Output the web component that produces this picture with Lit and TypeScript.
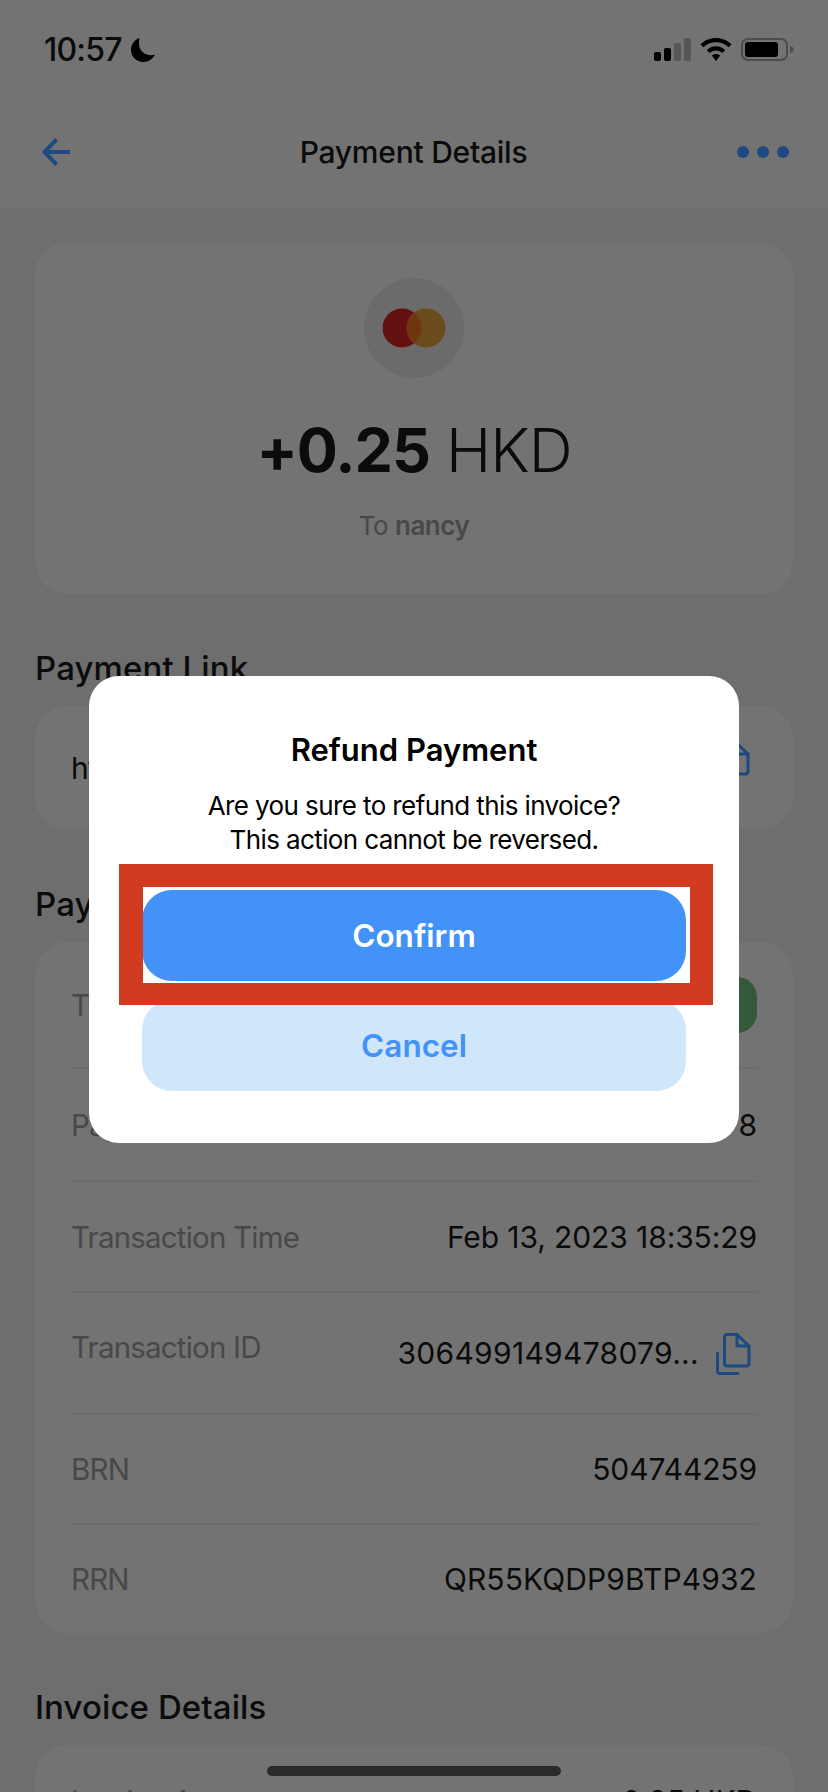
import { LitElement, html, css } from "lit";
import { customElement } from "lit/decorators.js";

const copyIcon = html`<svg class="copy" viewBox="0 0 36 43" fill="none" stroke="#1d4a80" stroke-width="3" stroke-linejoin="round" stroke-linecap="round">
  <path d="M12 2.500H22L34 14V31.500a2.500 2.500 0 0 1-2.500 2.500H12a2.500 2.500 0 0 1-2.500-2.500V5A2.500 2.500 0 0 1 12 2.500z"/>
  <path d="M22 2.500V14H34"/>
  <path d="M2.500 21V39a2.500 2.500 0 0 0 2.500 2.500H23"/>
</svg>`;

@customElement("app-root")
export class AppRoot extends LitElement {
  static styles = css`
    :host { display: block; width: 828px; height: 1792px; overflow: hidden; position: relative; background: #6e6e6e;
      font-family: Inter, "Liberation Sans", sans-serif; color: #0b0b0b; }
    .top { height: 208px; background: #737373; display: flex; flex-direction: column; }
    .status { height: 99px; display: flex; align-items: center; justify-content: space-between; padding: 0 34px 0 44px; }
    .time { display: flex; align-items: center; gap: 9px; font-size: 32px; font-weight: 500; letter-spacing: -0.8px; }
    .sicons { display: flex; align-items: center; gap: 9px; }
    .nav { flex: 1; display: grid; grid-template-columns: 1fr auto 1fr; align-items: center; padding: 0 39px 4px 42px; }
    .nav h1 { margin: 0 4px 0 0; font-size: 30px; font-weight: 500; letter-spacing: -0.25px; }
    .dots { display: flex; gap: 8px; justify-self: end; }
    .dots i { width: 12px; height: 12px; border-radius: 50%; background: #1d4a80; }
    .content { padding: 35px 35px 0; display: flex; flex-direction: column; }
    .card { background: #737373; border-radius: 32px; }
    .hero { height: 351px; display: flex; flex-direction: column; align-items: center; box-sizing: border-box; padding-top: 35px; }
    .logo { width: 100px; height: 100px; border-radius: 50%; background: #6b6b6b; display: flex; align-items: center; justify-content: center; }
    .amount { margin-top: 36px; font-size: 61px; line-height: 72px; font-weight: 300; letter-spacing: -1px; }
    .amount b { font-weight: 700; }
    .to { margin-top: 24px; font-size: 26px; line-height: 32px; color: #484848; letter-spacing: -0.5px; }
    .to b { font-weight: 600; }
    h2 { margin: 0; font-size: 33px; line-height: 36px; font-weight: 500; letter-spacing: 0.1px; }
    .s1 { margin-top: 56px; }
    .s2 { margin-top: 57px; }
    .s3 { margin-top: 56px; }
    .sec-card { margin-top: 20px; }
    .link { height: 123px; display: flex; align-items: center; justify-content: space-between; padding: 0 43px 0 36px; box-sizing: border-box; font-size: 30px; letter-spacing: -0.8px; }
    .link .copy { margin-top: -12px; }
    .rows { padding: 0 36px; }
    .row { display: flex; justify-content: space-between; align-items: center; font-size: 30px; letter-spacing: -0.1px; border-bottom: 2px solid #6d6d6d; box-sizing: border-box; }
    .row:last-child { border-bottom: none; }
    .k { color: #484848; font-size: 29.500px; letter-spacing: -0.8px; }
    .k.up { margin-top: -12px; }
    .pill { width: 130px; height: 56px; border-radius: 20px; background: #34593a; }
    .val { display: flex; align-items: center; gap: 16px; padding-right: 6px; letter-spacing: 0.3px; }
    .wide { letter-spacing: 0.1px; }
    .copy { width: 36px; height: 43px; display: block; }
    .dialog { position: absolute; left: 89px; top: 676px; width: 650px; height: 467px; background: #fff; border-radius: 30px; box-sizing: border-box;
      padding: 56px 53px 0; display: flex; flex-direction: column; text-align: center; }
    .dialog h3 { margin: 0; font-size: 31px; line-height: 36px; font-weight: 600; color: #000; }
    .dialog p { margin: 21px 0 0; font-size: 26px; line-height: 34px; color: #000; letter-spacing: -0.6px; }
    .btn { height: 91px; border-radius: 30px; display: flex; align-items: center; justify-content: center; font-size: 31.500px; font-weight: 600; }
    .confirm { margin-top: 33px; background: #4292f7; color: #fff; }
    .cancel { margin-top: 19px; background: #d0e6fb; color: #4292f7; }
    .mark { position: absolute; left: 119px; top: 864px; width: 594px; height: 141px; box-sizing: border-box; border: solid #d13b20; border-width: 23px 23px 22px 24px; }
    .home { position: absolute; left: 267px; top: 1766px; width: 294px; height: 10px; border-radius: 5px; background: #2a2a2a; }
    .mc { display: block; }
  `;

  private row(h: number, k: string, v: unknown, up = false) {
    return html`<div class="row" style="height:${h}px"><span class="k ${up ? "up" : ""}">${k}</span>${v}</div>`;
  }

  render() {
    return html`
      <div class="top">
        <div class="status">
          <div class="time">10:57
            <svg width="24" height="24" viewBox="0 0 24 24"><path fill="#000" d="M8.500 0C3.500 1.800 0 6.500 0 12c0 6.800 5.500 12 12.300 12 5.200 0 9.700-3 11.700-7.500-1.200.5-2.700.8-4.200.8C13.200 17.300 8 12.200 8 5.800c0-2 .2-4 .5-5.800z"/></svg>
          </div>
          <div class="sicons">
            <svg width="37" height="23" viewBox="0 0 37 23">
              <rect x="0" y="14" width="7" height="9" rx="2" fill="#000"/>
              <rect x="10" y="10" width="7" height="13" rx="2" fill="#000"/>
              <rect x="20" y="5" width="7" height="18" rx="2" fill="#565656"/>
              <rect x="30" y="0" width="7" height="23" rx="2" fill="#565656"/>
            </svg>
            <svg width="32" height="23" viewBox="0 0 32 23">
              <path fill="#000" d="M16 0C10 0 4.500 2.300 0.500 6.300L3.300 9.300C6.600 6 11 4.200 16 4.200s9.400 1.800 12.700 5.100l2.800-3C27.500 2.300 22 0 16 0z"/>
              <path fill="#000" d="M16 8.200c-3.600 0-6.800 1.400-9.200 3.700L9.600 15c1.700-1.600 3.900-2.600 6.400-2.600s4.700 1 6.400 2.600l2.800-3.100C22.800 9.600 19.600 8.200 16 8.200z"/>
              <path fill="#000" d="M16 16c-1.700 0-3.100.6-4.200 1.600L16 23l4.200-5.400C19.100 16.600 17.700 16 16 16z"/>
            </svg>
            <svg width="53" height="23" viewBox="0 0 53 23">
              <rect x="1" y="1" width="45" height="21" rx="6" fill="none" stroke="#4c4c4c" stroke-width="2"/>
              <rect x="4" y="4" width="33" height="15" rx="3" fill="#000"/>
              <path d="M49 8c2.300.6 3.500 1.900 3.500 3.500S51.300 14.400 49 15z" fill="#4c4c4c"/>
            </svg>
          </div>
        </div>
        <div class="nav">
          <svg width="28" height="28" viewBox="0 0 28 28" fill="none" stroke="#1d4a80" stroke-width="4"><path d="M28 14H3"/><path d="M14.500 1.500 2.500 14l12 12.500"/></svg>
          <h1>Payment Details</h1>
          <div class="dots"><i></i><i></i><i></i></div>
        </div>
      </div>
      <div class="content">
        <div class="card hero">
          <div class="logo">
            <svg class="mc" width="64" height="40" viewBox="0 0 64 40">
              <circle cx="20" cy="20" r="19.500" fill="#621010"/>
              <circle cx="44" cy="20" r="19.500" fill="#6b4a1c"/>
              <path fill="#703610" d="M32 4.630A19.500 19.500 0 0 1 32 35.370A19.500 19.500 0 0 1 32 4.630z"/>
            </svg>
          </div>
          <div class="amount"><b>+0.25</b> HKD</div>
          <div class="to">To <b>nancy</b></div>
        </div>
        <h2 class="s1">Payment Link</h2>
        <div class="card sec-card link"><span>https://pay.example.com/i/8f3a</span>${copyIcon}</div>
        <h2 class="s2">Payment Details</h2>
        <div class="card sec-card rows">
          ${this.row(127, "Type", html`<div class="pill"></div>`)}
          ${this.row(113, "Payment Method", html`<span>**** 5678</span>`)}
          ${this.row(111, "Transaction Time", html`<span>Feb 13, 2023 18:35:29</span>`)}
          ${this.row(122, "Transaction ID", html`<div class="val"><span>306499149478079...</span>${copyIcon}</div>`, true)}
          ${this.row(110, "BRN", html`<span>504744259</span>`)}
          ${this.row(108, "RRN", html`<span class="wide">QR55KQDP9BTP4932</span>`)}
        </div>
        <h2 class="s3">Invoice Details</h2>
        <div class="card sec-card rows">
          ${this.row(111, "Invoice Amount", html`<span>0.25 HKD</span>`)}
        </div>
      </div>
      <div class="home"></div>
      <div class="dialog">
        <h3>Refund Payment</h3>
        <p>Are you sure to refund this invoice?<br />This action cannot be reversed.</p>
        <div class="btn confirm">Confirm</div>
        <div class="btn cancel">Cancel</div>
      </div>
      <div class="mark"></div>
    `;
  }
}
